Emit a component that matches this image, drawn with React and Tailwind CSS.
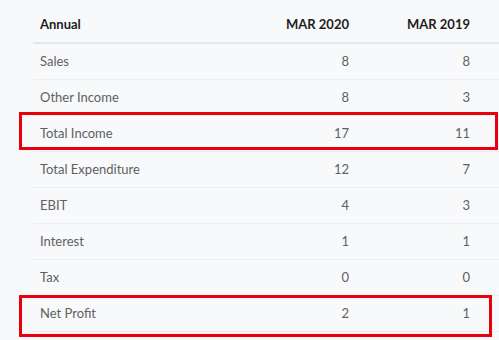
import React from "react";

const rows = [
  ["Sales", "8", "8"],
  ["Other Income", "8", "3"],
  ["Total Income", "17", "11"],
  ["Total Expenditure", "12", "7"],
  ["EBIT", "4", "3"],
  ["Interest", "1", "1"],
  ["Tax", "0", "0"],
  ["Net Profit", "2", "1"],
];

export default function App() {
  return (
    <div
      className="relative w-[499px] h-[340px] bg-[#f8f9fb] overflow-hidden"
      style={{ fontFamily: "Lato, 'Open Sans', sans-serif" }}
    >
      <div className="pl-[33px]">
        <div className="flex items-end h-[44px] border-b-2 border-[#e4e6ea] pb-[8px] text-[13px] font-bold text-[#1e1e1e]">
          <div className="flex-1 pl-[7px]">Annual</div>
          <div className="w-[120px] text-right">MAR 2020</div>
          <div className="w-[121px] text-right">MAR 2019</div>
          <div className="w-[29px]" />
        </div>
        {rows.map(([label, a, b]) => (
          <div
            key={label}
            className="flex items-center h-[36px] border-b border-[#eceef1] text-[13px] text-[#606060]"
          >
            <div className="flex-1 pl-[7px]">{label}</div>
            <div className="w-[120px] text-right">{a}</div>
            <div className="w-[121px] text-right">{b}</div>
            <div className="w-[29px]" />
          </div>
        ))}
      </div>
      <div className="absolute left-[19px] top-[112px] w-[479px] h-[38px] border-[3px] border-[#e8000b]" />
      <div className="absolute left-[19px] top-[295px] w-[473px] h-[42px] border-[3px] border-[#e8000b]" />
    </div>
  );
}
